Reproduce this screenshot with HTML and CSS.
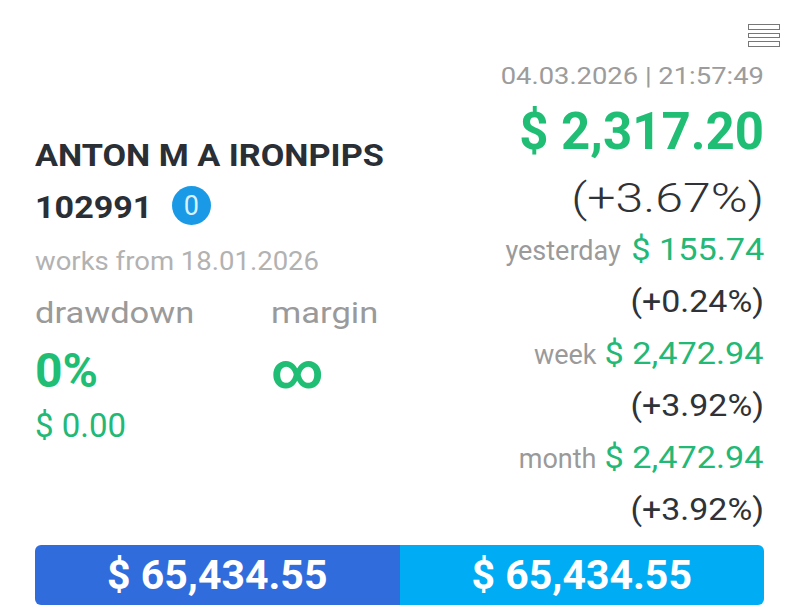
FILE: index.html
```html
<!DOCTYPE html>
<html>
<head>
<meta charset="utf-8">
<link rel="stylesheet" href="styles.css">
</head>
<body>
<div class="card">
  <div class="top">
    <div class="left">
      <div class="name"><span class="sx">ANTON M A IRONPIPS</span></div>
      <div class="acct"><span class="sx num">102991</span><span class="badge">0</span></div>
      <div class="since"><span class="sx">works from 18.01.2026</span></div>
      <div class="stats">
        <div class="stat dd">
          <div class="label"><span class="sx">drawdown</span></div>
          <div class="big">0%</div>
          <div class="sub">$ 0.00</div>
        </div>
        <div class="stat">
          <div class="label"><span class="sx">margin</span></div>
          <div class="big inf">∞</div>
        </div>
      </div>
    </div>
    <div class="right">
      <div class="menu"><span></span><span></span><span></span></div>
      <div class="date"><span class="sx">04.03.2026 | 21:57:49</span></div>
      <div class="profit">$ 2,317.20</div>
      <div class="pct"><span class="sx">(+3.67%)</span></div>
      <div class="row"><span class="lbl">yesterday</span> <span class="val sx">$ 155.74</span></div>
      <div class="row pc"><span class="sx">(+0.24%)</span></div>
      <div class="row"><span class="lbl">week</span> <span class="val sx">$ 2,472.94</span></div>
      <div class="row pc"><span class="sx">(+3.92%)</span></div>
      <div class="row"><span class="lbl">month</span> <span class="val sx">$ 2,472.94</span></div>
      <div class="row pc"><span class="sx">(+3.92%)</span></div>
    </div>
  </div>
  <div class="bar">
    <div class="half balance"><span>$ 65,434.55</span></div>
    <div class="half equity"><span>$ 65,434.55</span></div>
  </div>
</div>
</body>
</html>
```
FILE: styles.css
```css
html, body {
  margin: 0;
  padding: 0;
  background: #ffffff;
}
body {
  font-family: Roboto, "Noto Sans", sans-serif;
  width: 800px;
  height: 615px;
  overflow: hidden;
}
.card {
  padding: 0 36px 0 35px;
}
.top {
  display: flex;
  justify-content: space-between;
}
.sx {
  display: inline-block;
  white-space: nowrap;
}
.left .sx {
  transform-origin: left center;
}
.right .sx {
  transform-origin: right center;
}
.left {
  padding-top: 130px;
  flex: 0 0 auto;
}
.name {
  font-size: 31px;
  font-weight: 700;
  color: #2a2e35;
  line-height: 52px;
  height: 52px;
  white-space: nowrap;
}
.name .sx {
  transform: scaleX(1.105);
}
.acct {
  font-size: 31px;
  font-weight: 700;
  color: #2a2e35;
  line-height: 52px;
  height: 52px;
  display: flex;
  align-items: center;
}
.acct .num {
  transform: scaleX(1.1);
}
.badge {
  width: 39px;
  height: 39px;
  margin-left: 30px;
  margin-top: -5px;
  border-radius: 50%;
  background: #1a9ae6;
  color: #d9f1ff;
  font-size: 27px;
  font-weight: 400;
  display: inline-flex;
  align-items: center;
  justify-content: center;
}
.since {
  font-size: 25px;
  color: #b2b2b2;
  line-height: 56px;
  height: 56px;
}
.since .sx {
  transform: scaleX(1.1);
}
.stats {
  display: flex;
}
.stat.dd {
  width: 236px;
}
.label {
  font-size: 30px;
  color: #9a9a9a;
  line-height: 46px;
  height: 46px;
}
.label .sx {
  transform: scaleX(1.15);
}
.big {
  font-size: 48px;
  font-weight: 700;
  color: #1fbe74;
  line-height: 70px;
  height: 70px;
}
.big.inf {
  font-size: 50px;
}
.sub {
  font-size: 33px;
  color: #22b876;
  line-height: 40px;
}
.right {
  flex: 0 0 auto;
  display: flex;
  flex-direction: column;
  align-items: flex-end;
  text-align: right;
  padding-top: 24px;
}
.menu {
  display: flex;
  flex-direction: column;
  gap: 3px;
  margin-right: -16px;
  height: 23px;
  margin-bottom: 14px;
}
.menu span {
  display: block;
  width: 30px;
  height: 4px;
  border: 1.5px solid #777777;
  background: #ffffff;
}
.date {
  font-size: 24px;
  color: #9c9c9c;
  line-height: 30px;
  height: 30px;
}
.date .sx {
  transform: scaleX(1.14);
}
.profit {
  font-size: 51px;
  font-weight: 700;
  color: #1fbe74;
  line-height: 60px;
  height: 60px;
  margin-top: 11px;
}
.pct {
  font-size: 41px;
  font-weight: 300;
  color: #2f3338;
  line-height: 50px;
  height: 50px;
  margin-top: 11px;
}
.pct .sx {
  transform: scaleX(1.22);
}
.row {
  font-size: 32px;
  line-height: 52px;
  height: 52px;
  white-space: nowrap;
}
.row .lbl {
  font-size: 27px;
  color: #9a9a9a;
}
.row .val {
  color: #22b876;
  transform: scaleX(1.07);
  margin-left: 11px;
}
.row.pc {
  color: #2f3338;
}
.row.pc .sx {
  transform: scaleX(1.06);
}
.bar {
  display: flex;
  margin-top: 10px;
  height: 60px;
  border-radius: 6px;
  overflow: hidden;
}
.half {
  flex: 1;
  display: flex;
  align-items: center;
  justify-content: center;
  color: #ffffff;
  font-size: 41px;
  font-weight: 700;
  white-space: nowrap;
}
.balance {
  background: #316cdc;
}
.equity {
  background: #00adf5;
}
```
